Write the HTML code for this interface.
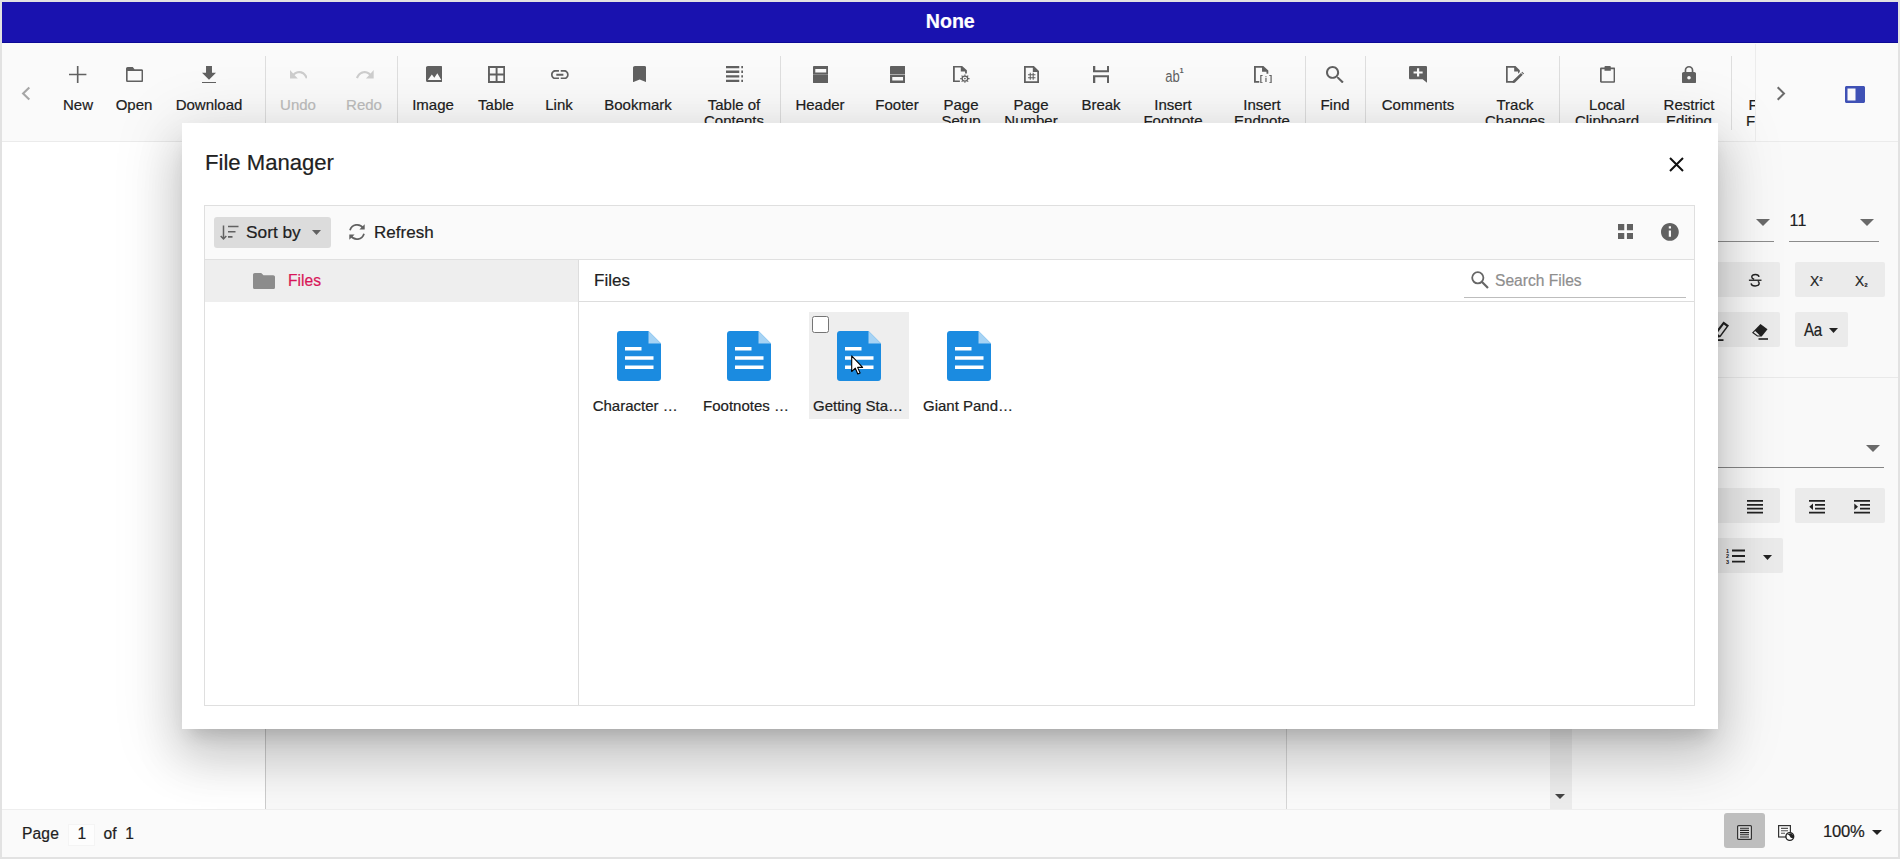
<!DOCTYPE html>
<html lang="en">
<head>
<meta charset="utf-8">
<title>Document Editor - File Manager</title>
<style>
html,body{margin:0;padding:0;}
body{width:1900px;height:859px;overflow:hidden;background:#fff;font-family:"Liberation Sans",Arial,sans-serif;color:#212121;-webkit-text-stroke:.2px;}
#frame{position:absolute;left:0;top:0;width:1900px;height:859px;box-sizing:border-box;border:2px solid #e2e2e2;overflow:hidden;background:#fff;}
#app{position:absolute;left:-2px;top:-2px;width:1900px;height:859px;}
/* all children of #app use page coordinates */
#title{position:absolute;left:2px;top:2px;width:1896px;height:41px;box-sizing:border-box;border-bottom:1px solid #0c0a96;background:#1912af;color:#fff;font-weight:bold;font-size:21px;line-height:38px;text-align:center;}
#toolbar{box-shadow:0 -1px 0 #fafafa;position:absolute;left:2px;top:44px;width:1896px;height:98px;background:#fafafa;border-bottom:1px solid #ebebeb;box-sizing:border-box;overflow:hidden;}
.ti{position:absolute;top:0;height:98px;width:140px;margin-left:-72px;text-align:center;font-size:15px;line-height:16.3px;color:#212121;}
.ti svg{display:block;margin:19px auto 0;width:22px;height:22px;fill:#616161;}
.ti span{position:absolute;left:0;right:0;top:52.5px;}
.ti.dis{color:#bdbdbd;}
.ti.dis svg{fill:#cdcdcd;}
.sep{position:absolute;top:12px;width:1px;height:80px;background:#dedede;}
#editor{position:absolute;left:2px;top:142px;width:1896px;height:667px;background:#ffffff;}
#status{position:absolute;left:2px;top:809px;width:1896px;height:48px;background:#fafafa;border-top:1px solid #eeeeee;box-sizing:border-box;font-size:16px;}
#dialog{position:absolute;left:182px;top:123px;width:1536px;height:605.5px;background:#fff;box-shadow:0 12.65px 17.25px -8.05px rgba(0,0,0,.15),0 27.60px 43.70px 3.45px rgba(0,0,0,.135),0 11.70px 59.80px 9.10px rgba(0,0,0,.125);}
.abs{position:absolute;}
</style>
</head>
<body>
<div id="frame"><div id="app">

<div id="title"><span style="display:inline-block;transform:scaleX(.935)">None</span></div>

<div id="toolbar">
<svg class="abs" style="left:18.7px;top:41.6px;width:10px;height:15px" viewBox="0 0 10 15"><path d="M8.3 1.4L2.1 7.5l6.2 6.1" fill="none" stroke="#a6a6a6" stroke-width="2.1"/></svg>
<div class="ti" style="left:78px"><svg viewBox="2.500 2.500 19.000 19.000" preserveAspectRatio="none" style="position:absolute;margin:0;left:61.30px;top:22.00px;width:17.40px;height:17.00px"><path d="M11.1 2.5h1.8v8.6h8.6v1.8h-8.6v8.6h-1.8v-8.6H2.5v-1.8h8.6z"/></svg><span>New</span></div>
<div class="ti" style="left:134px"><svg viewBox="1.500 3.600 21.000 17.000" preserveAspectRatio="none" style="position:absolute;margin:0;left:61.60px;top:22.80px;width:17.20px;height:15.20px"><path d="M20.5 6h-8.6L9.8 3.6H3.5C2.4 3.600 1.5 4.500 1.500 5.600v13c0 1.100.9 2 2 2h17c1.100 0 2-.9 2-2V8c0-1.100-.9-2-2-2zm0 12.600h-17V8h17v10.600z"/></svg><span>Open</span></div>
<div class="ti" style="left:209px"><svg viewBox="4.000 2.000 16.000 20.000" preserveAspectRatio="none" style="position:absolute;margin:0;left:63.00px;top:21.60px;width:14.00px;height:17.80px"><path d="M20 9.500h-4.600V2H8.600v7.500H4l8 8 8-8zM4 20v2h16v-2H4z"/></svg><span>Download</span></div>
<div class="sep" style="left:263px"></div>
<div class="ti dis" style="left:298px"><svg viewBox="2.000 7.000 20.470 9.000" preserveAspectRatio="none" style="position:absolute;margin:0;left:61.60px;top:26.20px;width:17.80px;height:8.60px"><path d="M12.500 8c-2.650 0-5.050.99-6.900 2.600L2 7v9h9l-3.620-3.620c1.390-1.160 3.160-1.880 5.120-1.880 3.540 0 6.550 2.310 7.600 5.500l2.370-.78C21.080 11.030 17.150 8 12.500 8z"/></svg><span>Undo</span></div>
<div class="ti dis" style="left:364px"><svg viewBox="1.540 7.000 20.460 9.000" preserveAspectRatio="none" style="position:absolute;margin:0;left:62.30px;top:26.20px;width:17.70px;height:8.60px"><path d="M18.400 10.600C16.550 8.990 14.150 8 11.500 8c-4.650 0-8.580 3.030-9.960 7.220L3.900 16c1.050-3.190 4.050-5.500 7.600-5.500 1.950 0 3.730.72 5.120 1.880L13 16h9V7l-3.600 3.600z"/></svg><span>Redo</span></div>
<div class="sep" style="left:395px"></div>
<div class="ti" style="left:433px"><svg viewBox="3.000 3.000 18.000 18.000" preserveAspectRatio="none" style="position:absolute;margin:0;left:62.60px;top:22.00px;width:16.70px;height:16.20px"><path d="M21 19V5c0-1.100-.9-2-2-2H5c-1.100 0-2 .9-2 2v14c0 1.100.9 2 2 2h14c1.100 0 2-.9 2-2zM5 18.700l4.300-6.300 2.700 3.700 3.200-5 4.300 7.600z"/></svg><span>Image</span></div>
<div class="ti" style="left:496px"><svg viewBox="3.000 3.000 18.000 18.000" preserveAspectRatio="none" style="position:absolute;margin:0;left:62.00px;top:22.00px;width:17.20px;height:17.00px"><path d="M3 3v18h18V3H3zm8 16H5v-6h6v6zm0-8H5V5h6v6zm8 8h-6v-6h6v6zm0-8h-6V5h6v6z"/></svg><span>Table</span></div>
<div class="ti" style="left:559px"><svg viewBox="2.000 7.000 20.000 10.000" preserveAspectRatio="none" style="position:absolute;margin:0;left:62.20px;top:25.80px;width:17.70px;height:9.40px"><path d="M3.900 12c0-1.710 1.390-3.100 3.100-3.100h4V7H7c-2.760 0-5 2.240-5 5s2.240 5 5 5h4v-1.900H7c-1.710 0-3.100-1.390-3.100-3.100zM8 13h8v-2H8v2zm9-6h-4v1.900h4c1.710 0 3.100 1.390 3.100 3.100s-1.390 3.100-3.100 3.100h-4V17h4c2.760 0 5-2.240 5-5s-2.240-5-5-5z"/></svg><span>Link</span></div>
<div class="ti" style="left:638px"><svg viewBox="5.000 3.000 14.000 18.000" preserveAspectRatio="none" style="position:absolute;margin:0;left:64.50px;top:22.00px;width:13.40px;height:16.20px"><path d="M17 3H7c-1.100 0-1.990.9-1.990 2L5 21l7-3 7 3V5c0-1.100-.9-2-2-2z"/></svg><span>Bookmark</span></div>
<div class="ti" style="left:734px"><svg viewBox="2.000 4.000 20.000 17.900" preserveAspectRatio="none" style="position:absolute;margin:0;left:61.50px;top:22.00px;width:17.70px;height:16.20px"><path d="M2 4h15v2.600H2zM2 9.100h15v2.600H2zM2 14.200h15v2.600H2zM2 19.300h15v2.600H2zM19.300 4H22v2.600h-2.700zM19.300 9.100H22v2.600h-2.700zM19.300 14.200H22v2.600h-2.700zM19.300 19.300H22v2.600h-2.700z"/></svg><span>Table of<br>Contents</span></div>
<div class="sep" style="left:778px"></div>
<div class="ti" style="left:820px"><svg viewBox="3.500 2.000 17.000 20.000" preserveAspectRatio="none" style="position:absolute;margin:0;left:62.50px;top:21.70px;width:15.50px;height:17.30px"><path d="M4.500 2h15c.6 0 1 .4 1 1v18c0 .6-.4 1-1 1h-15c-.6 0-1-.4-1-1V3c0-.6.4-1 1-1zM6 5.400v4.200h12V5.400zM3.500 11.700v.5h17v-.5z" fill-rule="evenodd"/></svg><span>Header</span></div>
<div class="ti" style="left:897px"><svg viewBox="3.500 2.000 17.000 20.000" preserveAspectRatio="none" style="position:absolute;margin:0;left:62.50px;top:21.70px;width:15.30px;height:17.30px"><path d="M4.500 2h15c.6 0 1 .4 1 1v18c0 .6-.4 1-1 1h-15c-.6 0-1-.4-1-1V3c0-.6.4-1 1-1zM6 14.600v4.200h12v-4.200zM3.500 11.800v.5h17v-.5z" fill-rule="evenodd"/></svg><span>Footer</span></div>
<div class="ti" style="left:961px"><svg viewBox="3.500 2.000 19.100 21.400" preserveAspectRatio="none" style="position:absolute;margin:0;left:61.70px;top:21.70px;width:17.10px;height:17.30px"><path d="M3.500 2h10.200l5.300 5.300v3.900h-2V8.800h-4.800V4H5.500v15.800h5.700v2H3.500z"/><circle cx="16.800" cy="17.600" r="3.100" fill="none" stroke="#616161" stroke-width="1.500"/><path d="M16.800 12.400v10.400M11.600 17.600H22M13.100 13.900l7.400 7.400M20.500 13.900l-7.400 7.400" stroke="#616161" stroke-width="1.300" fill="none" stroke-dasharray="1.700 7"/><circle cx="16.800" cy="17.600" r="1" /></svg><span>Page<br>Setup</span></div>
<div class="ti" style="left:1031px"><svg viewBox="3.500 2.000 17.000 20.000" preserveAspectRatio="none" style="position:absolute;margin:0;left:63.00px;top:22.00px;width:15.00px;height:17.00px"><path d="M3.500 2h11.200l5.800 5.800V22h-17zM5.500 4v16h13V9h-5V4z" fill-rule="evenodd"/><path d="M8 12.200h8.500M8 15.800h8.500M10.600 9.800v8.400M13.900 9.800v8.400" stroke="#616161" stroke-width="1.200" fill="none"/></svg><span>Page<br>Number</span></div>
<div class="ti" style="left:1101px"><svg viewBox="2.700 0.000 18.600 24.000" preserveAspectRatio="none" style="position:absolute;margin:0;left:61.70px;top:21.70px;width:16.30px;height:17.40px"><path d="M2.700 0h2.600v6h13.400V0h2.600v8.600H2.700zM2.700 24h2.600v-8.600h13.400V24h2.600V12.800H2.700z"/></svg><span>Break</span></div>
<div class="ti" style="left:1173px"><svg viewBox="0 0 24 24" style="position:absolute;margin:0;left:60px;top:20px;width:24px;height:24px"><text transform="translate(2.200 17.500) scale(.79 1)" font-family="Liberation Sans, sans-serif" font-size="16.500" fill="#616161">ab</text><text x="16.400" y="8.800" font-family="Liberation Sans, sans-serif" font-size="7.500" font-weight="bold" fill="#616161">1</text></svg><span>Insert<br>Footnote</span></div>
<div class="ti" style="left:1262px"><svg viewBox="3.500 2.000 19.150 20.450" preserveAspectRatio="none" style="position:absolute;margin:0;left:62.00px;top:21.70px;width:17.70px;height:17.30px"><path d="M3.500 2h10.200l5.300 5.300v3.900h-2V8.800h-4.800V4H5.500v15.800h3.700v2H3.500z"/><path d="M12.800 13.200h-1.900v8.600h1.900M20.100 13.200H22v8.600h-1.900M16.450 16.300v4.600M16.450 14v1.400" stroke="#616161" stroke-width="1.300" fill="none"/></svg><span>Insert<br>Endnote</span></div>
<div class="sep" style="left:1303px"></div>
<div class="ti" style="left:1335px"><svg viewBox="1.650 1.450 20.114 20.113" preserveAspectRatio="none" style="position:absolute;margin:0;left:61.30px;top:21.70px;width:17.70px;height:17.30px"><path d="M15.500 14h-.79l-.28-.27C15.410 12.590 16 11.110 16 9.500 16 5.910 13.090 3 9.500 3S3 5.910 3 9.500 5.910 16 9.500 16c1.610 0 3.090-.59 4.230-1.570l.27.28v.79l5 4.990L20.490 19l-4.990-5zm-6 0C7.010 14 5 11.990 5 9.500S7.010 5 9.500 5 14 7.010 14 9.500 11.990 14 9.500 14z" transform="translate(-1.800 -2) scale(1.150)"/></svg><span>Find</span></div>
<div class="sep" style="left:1363px"></div>
<div class="ti" style="left:1418px"><svg viewBox="2.000 2.000 20.000 20.500" preserveAspectRatio="none" style="position:absolute;margin:0;left:61.00px;top:21.70px;width:18.20px;height:17.00px"><path d="M22 3.500c0-.83-.67-1.500-1.500-1.500h-17C2.670 2 2 2.670 2 3.500v13c0 .83.670 1.500 1.500 1.500H17l5 4.500zM17 11h-3.800v3.800h-2.400V11H7V8.600h3.800V4.800h2.400v3.800H17z"/></svg><span>Comments</span></div>
<div class="ti" style="left:1515px"><svg viewBox="3.000 2.000 21.000 20.600" preserveAspectRatio="none" style="position:absolute;margin:0;left:60.80px;top:21.70px;width:18.10px;height:17.30px"><path d="M3 2h11l5 5v2.200l-2 2V8.500h-4.500V4H5v16h7.500l-2 2H3z"/><path d="M20.300 10.300l2.200 2.200-9.300 9.300-3 .8.800-3zM20.900 9.700l.9-.9 2.200 2.200-.9.900z"/></svg><span>Track<br>Changes</span></div>
<div class="sep" style="left:1557px"></div>
<div class="ti" style="left:1607px"><svg viewBox="3.000 1.500 18.000 21.000" preserveAspectRatio="none" style="position:absolute;margin:0;left:63.00px;top:22.00px;width:15.30px;height:16.80px"><path d="M19.500 3.500h-3.800V2.700c0-.7-.5-1.200-1.200-1.200h-5c-.7 0-1.200.5-1.200 1.200v.8H4.500c-.8 0-1.500.7-1.500 1.500v16c0 .8.700 1.500 1.500 1.500h15c.8 0 1.500-.7 1.500-1.500V5c0-.8-.7-1.500-1.500-1.500zM19 20.500H5v-15h3.300v1.800h7.400V5.500H19z"/></svg><span>Local<br>Clipboard</span></div>
<div class="ti" style="left:1689px"><svg viewBox="4.000 1.000 16.000 21.000" preserveAspectRatio="none" style="position:absolute;margin:0;left:63.00px;top:21.50px;width:14.00px;height:17.70px"><path d="M18 8h-1V6c0-2.760-2.240-5-5-5S7 3.240 7 6v2H6c-1.100 0-2 .9-2 2v10c0 1.100.9 2 2 2h12c1.100 0 2-.9 2-2V10c0-1.100-.9-2-2-2zm-6 9c-1.100 0-2-.9-2-2s.9-2 2-2 2 .9 2 2-.9 2-2 2zm3.100-9H8.900V6c0-1.710 1.390-3.100 3.100-3.100 1.710 0 3.100 1.390 3.100 3.100v2z"/></svg><span>Restrict<br>Editing</span></div>
<div class="sep" style="left:1729px;height:74px"></div>
<div class="ti" style="left:1766px"><span>Form<br>Fields</span></div>
<div class="abs" style="left:1753px;top:0;width:143px;height:98px;background:#fafafa;border-left:1px solid #ececec"></div>
<svg class="abs" style="left:1773.600px;top:41.500px;width:10px;height:15px" viewBox="0 0 10 15"><path d="M1.700 1.200L8 7.500l-6.300 6.300" fill="none" stroke="#6b6b6b" stroke-width="2"/></svg>
<svg class="abs" style="left:1843px;top:42px;width:20px;height:17px" viewBox="0 0 20 17"><path d="M1.500 0h17c.8 0 1.500.7 1.500 1.500v14c0 .8-.7 1.500-1.500 1.500h-17C.7 17 0 16.300 0 15.500v-14C0 .7.700 0 1.500 0zM2.500 2.500v12h8V2.500z" fill="#3f51b5" fill-rule="evenodd"/></svg>

</div>

<div id="editor">
<!-- coordinates here are page coords minus (2,142) -->
<div class="abs" style="left:263px;top:0;width:1022px;height:667px;background:#f8f8f8;border-left:1px solid #cccccc;border-right:1px solid #d6d6d6;box-sizing:border-box"></div>
<div class="abs" style="left:1285px;top:0;width:263px;height:667px;background:#fafafa"></div>
<div class="abs" style="left:1548px;top:0;width:22px;height:667px;background:#ececec"></div>
<svg class="abs" style="left:1553px;top:652px;width:10px;height:5px" viewBox="0 0 10 5"><path d="M0 0h10L5 5z" fill="#444"/></svg>
<div class="abs" id="pane" style="left:1570px;top:0;width:326px;height:667px;background:#f9f9f9">
 <!-- pane coords: page minus (1572,142) -->
 <svg class="abs" style="left:184px;top:76.500px;width:14px;height:7px" viewBox="0 0 14 7"><path d="M0 0h14L7 7z" fill="#6a6a6a"/></svg>
 <div class="abs" style="left:20px;top:99px;width:182px;height:1px;background:#8c8c8c"></div>
 <div class="abs" id="fs11" style="left:217.500px;top:69px;font-size:16px;line-height:20px;color:#212121;letter-spacing:.3px">11</div>
 <svg class="abs" style="left:288px;top:76.500px;width:14px;height:7px" viewBox="0 0 14 7"><path d="M0 0h14L7 7z" fill="#6a6a6a"/></svg>
 <div class="abs" style="left:217px;top:99px;width:90px;height:1px;background:#8c8c8c"></div>
 <!-- row1 -->
 <div class="abs" style="left:30px;top:120px;width:178px;height:35px;background:#ebebeb;border-radius:2px"></div>
 <div class="abs" style="left:223px;top:120px;width:90px;height:35px;background:#ebebeb;border-radius:2px"></div>
 <svg class="abs" style="left:176px;top:131px;width:14.400px;height:14.400px" viewBox="0 0 16 16"><path d="M12.300 4.300C12 2.600 10.500 1.600 8.200 1.600 5.800 1.600 4.200 2.700 4.200 4.400c0 1.300 1 2.100 2.600 2.600M3.500 11.500c.2 1.800 1.900 2.900 4.500 2.900 2.700 0 4.400-1.100 4.400-2.900 0-1-.5-1.700-1.500-2.200" fill="none" stroke="#222" stroke-width="1.600"/><path d="M1 7.300h14v1.500H1z" fill="#222"/></svg>
 <div class="abs" style="left:238px;top:128.500px;font-size:15px;line-height:20px;color:#222;white-space:nowrap;transform:scaleX(.92);transform-origin:0 0">X<span style="font-size:6px;font-weight:bold;position:relative;top:-5px;left:.3px">2</span></div>
 <div class="abs" style="left:283px;top:128.500px;font-size:15px;line-height:20px;color:#222;white-space:nowrap;transform:scaleX(.92);transform-origin:0 0">X<span style="font-size:6px;font-weight:bold;position:relative;top:1.500px;left:.3px">2</span></div>
 <!-- row2 -->
 <div class="abs" style="left:30px;top:170px;width:178px;height:35px;background:#ebebeb;border-radius:2px"></div>
 <div class="abs" style="left:223px;top:170px;width:53px;height:35px;background:#ebebeb;border-radius:2px"></div>
 <svg class="abs" style="left:138px;top:178px;width:22px;height:22px" viewBox="0 0 22 22"><path d="M13.500 1.500l5.500 4-8.500 11.500-6.500 1.500 1-6z" fill="#222"/><path d="M13.800 4.600l2.700 2-6.700 9-2.700-2z" fill="#ebebeb"/><path d="M3 19.200h10.500v1.800H3z" fill="#222"/></svg>
 <svg class="abs" style="left:178px;top:180.500px;width:19px;height:18px" viewBox="0 0 19 18"><path d="M10.500 1l7 5.300-5.800 7.200H7.200L2 9.800z" fill="#222"/><path d="M3.700 9.600l4 3h2.200l-4.700-4.600z" fill="#ebebeb"/><path d="M8.500 15.200h9.500v1.600H8.500z" fill="#222"/></svg>
 <div class="abs" id="aa" style="left:232px;top:177.500px;font-size:18px;line-height:20px;color:#222;letter-spacing:-.4px;transform:scaleX(.84);transform-origin:0 0">Aa</div>
 <svg class="abs" style="left:256.500px;top:186px;width:9px;height:5px" viewBox="0 0 9 5"><path d="M0 0h9L4.500 5z" fill="#222"/></svg>
 <div class="abs" style="left:0;top:235px;width:326px;height:1px;background:#e9e9e9"></div>
 <!-- style dropdown -->
 <svg class="abs" style="left:294px;top:303px;width:14px;height:7px" viewBox="0 0 14 7"><path d="M0 0h14L7 7z" fill="#6a6a6a"/></svg>
 <div class="abs" style="left:20px;top:325px;width:292px;height:1px;background:#858585"></div>
 <!-- row3 -->
 <div class="abs" style="left:30px;top:346px;width:178px;height:35px;background:#ebebeb;border-radius:2px"></div>
 <div class="abs" style="left:223px;top:346px;width:90px;height:35px;background:#ebebeb;border-radius:2px"></div>
 <svg class="abs" style="left:175px;top:358px;width:16px;height:14px" viewBox="0 0 16 14"><path d="M0 0h16v1.800H0zM0 3.900h16v1.800H0zM0 7.800h16v1.800H0zM0 11.700h16v1.800H0z" fill="#222"/></svg>
 <svg class="abs" style="left:237px;top:358px;width:16px;height:14px" viewBox="0 0 16 14"><path d="M0 0h16v1.800H0zM6 3.900h10v1.800H6zM6 7.800h10v1.800H6zM0 11.700h16v1.800H0zM4 3.600v6.300L0.300 6.750z" fill="#222"/></svg>
 <svg class="abs" style="left:282px;top:358px;width:16px;height:14px" viewBox="0 0 16 14"><path d="M0 0h16v1.800H0zM6 3.900h10v1.800H6zM6 7.800h10v1.800H6zM0 11.700h16v1.800H0zM0.300 3.600v6.300L4 6.750z" fill="#222"/></svg>
 <!-- row4 -->
 <div class="abs" style="left:30px;top:396px;width:181px;height:35px;background:#ebebeb;border-radius:2px"></div>
 <svg class="abs" style="left:154px;top:406px;width:19px;height:16px" viewBox="0 0 19 16"><path d="M6 1.500h13v1.900H6zM6 7.100h13V9H6zM6 12.700h13v1.900H6z" fill="#222"/><text x="0" y="4.500" font-family="Liberation Sans, sans-serif" font-size="5.500" font-weight="bold" fill="#222">1</text><text x="0" y="10" font-family="Liberation Sans, sans-serif" font-size="5.500" font-weight="bold" fill="#222">2</text><text x="0" y="15.500" font-family="Liberation Sans, sans-serif" font-size="5.500" font-weight="bold" fill="#222">3</text></svg>
 <svg class="abs" style="left:191px;top:413px;width:9px;height:5px" viewBox="0 0 9 5"><path d="M0 0h9L4.500 5z" fill="#222"/></svg>
</div>

</div>

<div id="status">
<!-- coords: page minus (2,809); the border-top takes 1px -->
<div class="abs" id="stpage" style="left:20px;top:14px;font-size:15.6px;line-height:20px;white-space:nowrap;letter-spacing:.15px">Page</div>
<div class="abs" style="left:66px;top:14px;width:27px;height:22px;background:#fdfdfd;border:1px solid #f4f4f4;box-sizing:border-box"></div>
<div class="abs" id="stnum" style="left:75.500px;top:14px;font-size:15.6px;line-height:20px">1</div>
<div class="abs" id="stof" style="left:101.500px;top:14px;font-size:15.6px;line-height:20px;white-space:nowrap;word-spacing:4.500px">of 1</div>
<div class="abs" style="left:1722px;top:3px;width:41px;height:35px;background:#bebebe;border-radius:3px"></div>
<svg class="abs" style="left:1735px;top:15px;width:15px;height:15px" viewBox="0 0 15 15"><rect x=".6" y=".6" width="13.800" height="13.800" rx="1" fill="#ddd" stroke="#333" stroke-width="1.200"/><path d="M3 3.200h9M3 5.400h9M3 7.600h9M3 9.800h9M3 12h9" stroke="#222" stroke-width="1.100"/></svg>
<svg class="abs" style="left:1776px;top:15px;width:18px;height:17px" viewBox="0 0 18 17"><rect x=".6" y=".6" width="11.800" height="11.400" fill="#fafafa" stroke="#333" stroke-width="1.200"/><path d="M3 3.400h7M3 5.800h7M3 8.200h4" stroke="#555" stroke-width="1.100"/><circle cx="11.800" cy="11.500" r="3.900" fill="#fff" stroke="#222" stroke-width="1.400"/><path d="M8.600 9.200c2 .2 3 1.200 3.400 2.400.4 1.200 1.600 1.800 3.200 1.600l.4-2.400-2.200-2.600z" fill="#222"/></svg>
<div class="abs" id="zoom" style="left:1821px;top:11px;font-size:16.600px;line-height:22px;letter-spacing:-.25px;white-space:nowrap">100%</div>
<svg class="abs" style="left:1870px;top:20px;width:10px;height:5px" viewBox="0 0 10 5"><path d="M0 0h10L5 5z" fill="#222"/></svg>

</div>

<div id="dialog"><div class="abs" style="left:0;top:-1px;width:1536px;height:606px">
<div class="abs" id="dtitle" style="left:23px;top:27px;font-size:22.1px;line-height:28px;color:#212121;white-space:nowrap">File Manager</div>
<svg class="abs" style="left:1487.400px;top:35.300px;width:15px;height:15px" viewBox="0 0 15 15"><path d="M1 1l13 13M14 1L1 14" stroke="#111" stroke-width="2" fill="none"/></svg>
<div class="abs" id="fm" style="left:22px;top:83px;width:1491px;height:501px;box-sizing:border-box;border:1px solid #dfdfdf;background:#fff">
 <div class="abs" style="left:0;top:0;width:1489px;height:53px;background:#fafafa;border-bottom:1px solid #e0e0e0"></div>
 <div class="abs" style="left:9px;top:11px;width:117px;height:31px;background:#dcdcdc;border-radius:3px"></div>
 <svg class="abs" style="left:15px;top:19px;width:19px;height:16px" viewBox="0 0 19 16"><path d="M3.500 0.500v13.500M0.700 11l2.800 3 2.800-3" fill="none" stroke="#616161" stroke-width="1.500"/><path d="M8 1.500h10.500M8 6.700h7.500M8 11.900h4.500" fill="none" stroke="#616161" stroke-width="1.600"/></svg>
 <div class="abs" id="sortby" style="left:41px;top:15px;font-size:17.3px;line-height:22px;white-space:nowrap">Sort by</div>
 <svg class="abs" style="left:107px;top:24px;width:9px;height:5px" viewBox="0 0 9 5"><path d="M0 0h9L4.500 5z" fill="#616161"/></svg>
 <svg class="abs" style="left:142px;top:16px;width:20px;height:20px" viewBox="0 0 20 20"><path d="M16.200 6.200A7.300 7.300 0 0 0 3 8.300M3.800 13.800A7.300 7.300 0 0 0 17 11.700" fill="none" stroke="#616161" stroke-width="1.700"/><path d="M17.700 2.300v5.300h-5.300zM2.300 17.700v-5.300h5.300z" fill="#616161"/></svg>
 <div class="abs" id="refresh" style="left:169px;top:16px;font-size:17px;line-height:22px;letter-spacing:.05px;white-space:nowrap">Refresh</div>
 <svg class="abs" style="left:1413px;top:17.700px;width:15.200px;height:15.200px" viewBox="0 0 16 16"><path d="M0 0h6.600v6.600H0zM9.400 0H16v6.600H9.400zM0 9.400h6.600V16H0zM9.400 9.400H16V16H9.400z" fill="#616161"/></svg>
 <svg class="abs" style="left:1456px;top:16.800px;width:17.800px;height:17.800px" viewBox="0 0 24 24"><path d="M12 0C5.400 0 0 5.400 0 12s5.400 12 12 12 12-5.400 12-12S18.600 0 12 0zm1.500 18.500h-3V10h3v8.500zm0-11h-3v-3h3v3z" fill="#616161"/></svg>
 <!-- nav pane -->
 <div class="abs" style="left:0;top:54px;width:373px;height:42px;background:#eeeeee"></div>
 <svg class="abs" style="left:48px;top:67px;width:22px;height:16.200px" viewBox="0 0 22 17" preserveAspectRatio="none"><path d="M1.800 0h6.400l2.300 2.300h9.700c1 0 1.800.8 1.800 1.800v11.100c0 1-.8 1.800-1.800 1.800H1.800c-1 0-1.800-.8-1.800-1.800V1.800C0 .8.800 0 1.800 0z" fill="#8c8c8c"/></svg>
 <div class="abs" id="navfiles" style="left:83px;top:65px;font-size:15.6px;line-height:20px;color:#d81558;white-space:nowrap">Files</div>
 <div class="abs" style="left:373px;top:54px;width:1px;height:445px;background:#dddddd"></div>
 <!-- breadcrumb + search -->
 <div class="abs" id="bcfiles" style="left:389px;top:64px;font-size:17px;line-height:22px;white-space:nowrap">Files</div>
 <div class="abs" style="left:374px;top:95px;width:1115px;height:1px;background:#dddddd"></div>
 <svg class="abs" style="left:1266px;top:64.800px;width:18px;height:18px" viewBox="0 0 18 18"><circle cx="6.800" cy="6.800" r="5.600" fill="none" stroke="#666" stroke-width="1.800"/><path d="M10.800 10.800l6.200 6.200" stroke="#666" stroke-width="2.200" fill="none"/></svg>
 <div class="abs" id="search" style="left:1290px;top:65px;font-size:15.6px;line-height:20px;color:#8e8e8e;white-space:nowrap">Search Files</div>
 <div class="abs" style="left:1259px;top:91px;width:222px;height:1px;background:#bdbdbd"></div>
 <!-- files -->
 <div class="abs" style="left:604px;top:106px;width:100px;height:107px;background:#eeeeee"></div>
 <svg class="abs" style="left:412px;top:125px;width:44px;height:50px" viewBox="0 0 44 50"><path d="M3 0h28.500L44 12.500V47c0 1.700-1.300 3-3 3H3c-1.700 0-3-1.300-3-3V3c0-1.700 1.300-3 3-3z" fill="#1b8be0"/><path d="M31.500 0L44 12.500H31.500z" fill="#a6d3f4"/><path d="M8 16h16.500v3.500H8zM8 25.200h28.500v3.500H8zM8 34.600h28.500v3.500H8z" fill="#fff"/></svg>
 <div class="abs flabel" style="left:387.7px;top:190px;font-size:15px;line-height:20px;white-space:nowrap">Character …</div>
 <svg class="abs" style="left:522px;top:125px;width:44px;height:50px" viewBox="0 0 44 50"><path d="M3 0h28.500L44 12.500V47c0 1.700-1.300 3-3 3H3c-1.700 0-3-1.300-3-3V3c0-1.700 1.300-3 3-3z" fill="#1b8be0"/><path d="M31.500 0L44 12.500H31.500z" fill="#a6d3f4"/><path d="M8 16h16.500v3.500H8zM8 25.200h28.500v3.500H8zM8 34.600h28.500v3.500H8z" fill="#fff"/></svg>
 <div class="abs flabel" style="left:498.1px;top:190px;font-size:15px;line-height:20px;white-space:nowrap">Footnotes …</div>
 <svg class="abs" style="left:632px;top:125px;width:44px;height:50px" viewBox="0 0 44 50"><path d="M3 0h28.500L44 12.500V47c0 1.700-1.300 3-3 3H3c-1.700 0-3-1.300-3-3V3c0-1.700 1.300-3 3-3z" fill="#1b8be0"/><path d="M31.500 0L44 12.500H31.500z" fill="#a6d3f4"/><path d="M8 16h16.500v3.500H8zM8 25.200h28.500v3.500H8zM8 34.600h28.500v3.500H8z" fill="#fff"/></svg>
 <div class="abs flabel" style="left:608.0px;top:190px;font-size:15px;line-height:20px;white-space:nowrap">Getting Sta…</div>
 <svg class="abs" style="left:742px;top:125px;width:44px;height:50px" viewBox="0 0 44 50"><path d="M3 0h28.500L44 12.500V47c0 1.700-1.300 3-3 3H3c-1.700 0-3-1.300-3-3V3c0-1.700 1.300-3 3-3z" fill="#1b8be0"/><path d="M31.500 0L44 12.500H31.500z" fill="#a6d3f4"/><path d="M8 16h16.500v3.500H8zM8 25.200h28.500v3.500H8zM8 34.600h28.500v3.500H8z" fill="#fff"/></svg>
 <div class="abs flabel" style="left:718.0px;top:190px;font-size:15px;line-height:20px;white-space:nowrap">Giant Pand…</div>
 <div class="abs" style="left:607px;top:110px;width:17px;height:17px;box-sizing:border-box;border:1.500px solid #757575;border-radius:2.500px;background:#fff"></div>
 <svg class="abs" style="left:646px;top:149px;width:13px;height:20px" viewBox="0 0 13 20"><path d="M0.700 0.800v15.700l3.600-3.300 2.500 5.800 2.300-1-2.500-5.600h5z" fill="#fff" stroke="#000" stroke-width="1.100" stroke-linejoin="round"/></svg>

</div>

</div></div>

</div></div>
</body>
</html>
